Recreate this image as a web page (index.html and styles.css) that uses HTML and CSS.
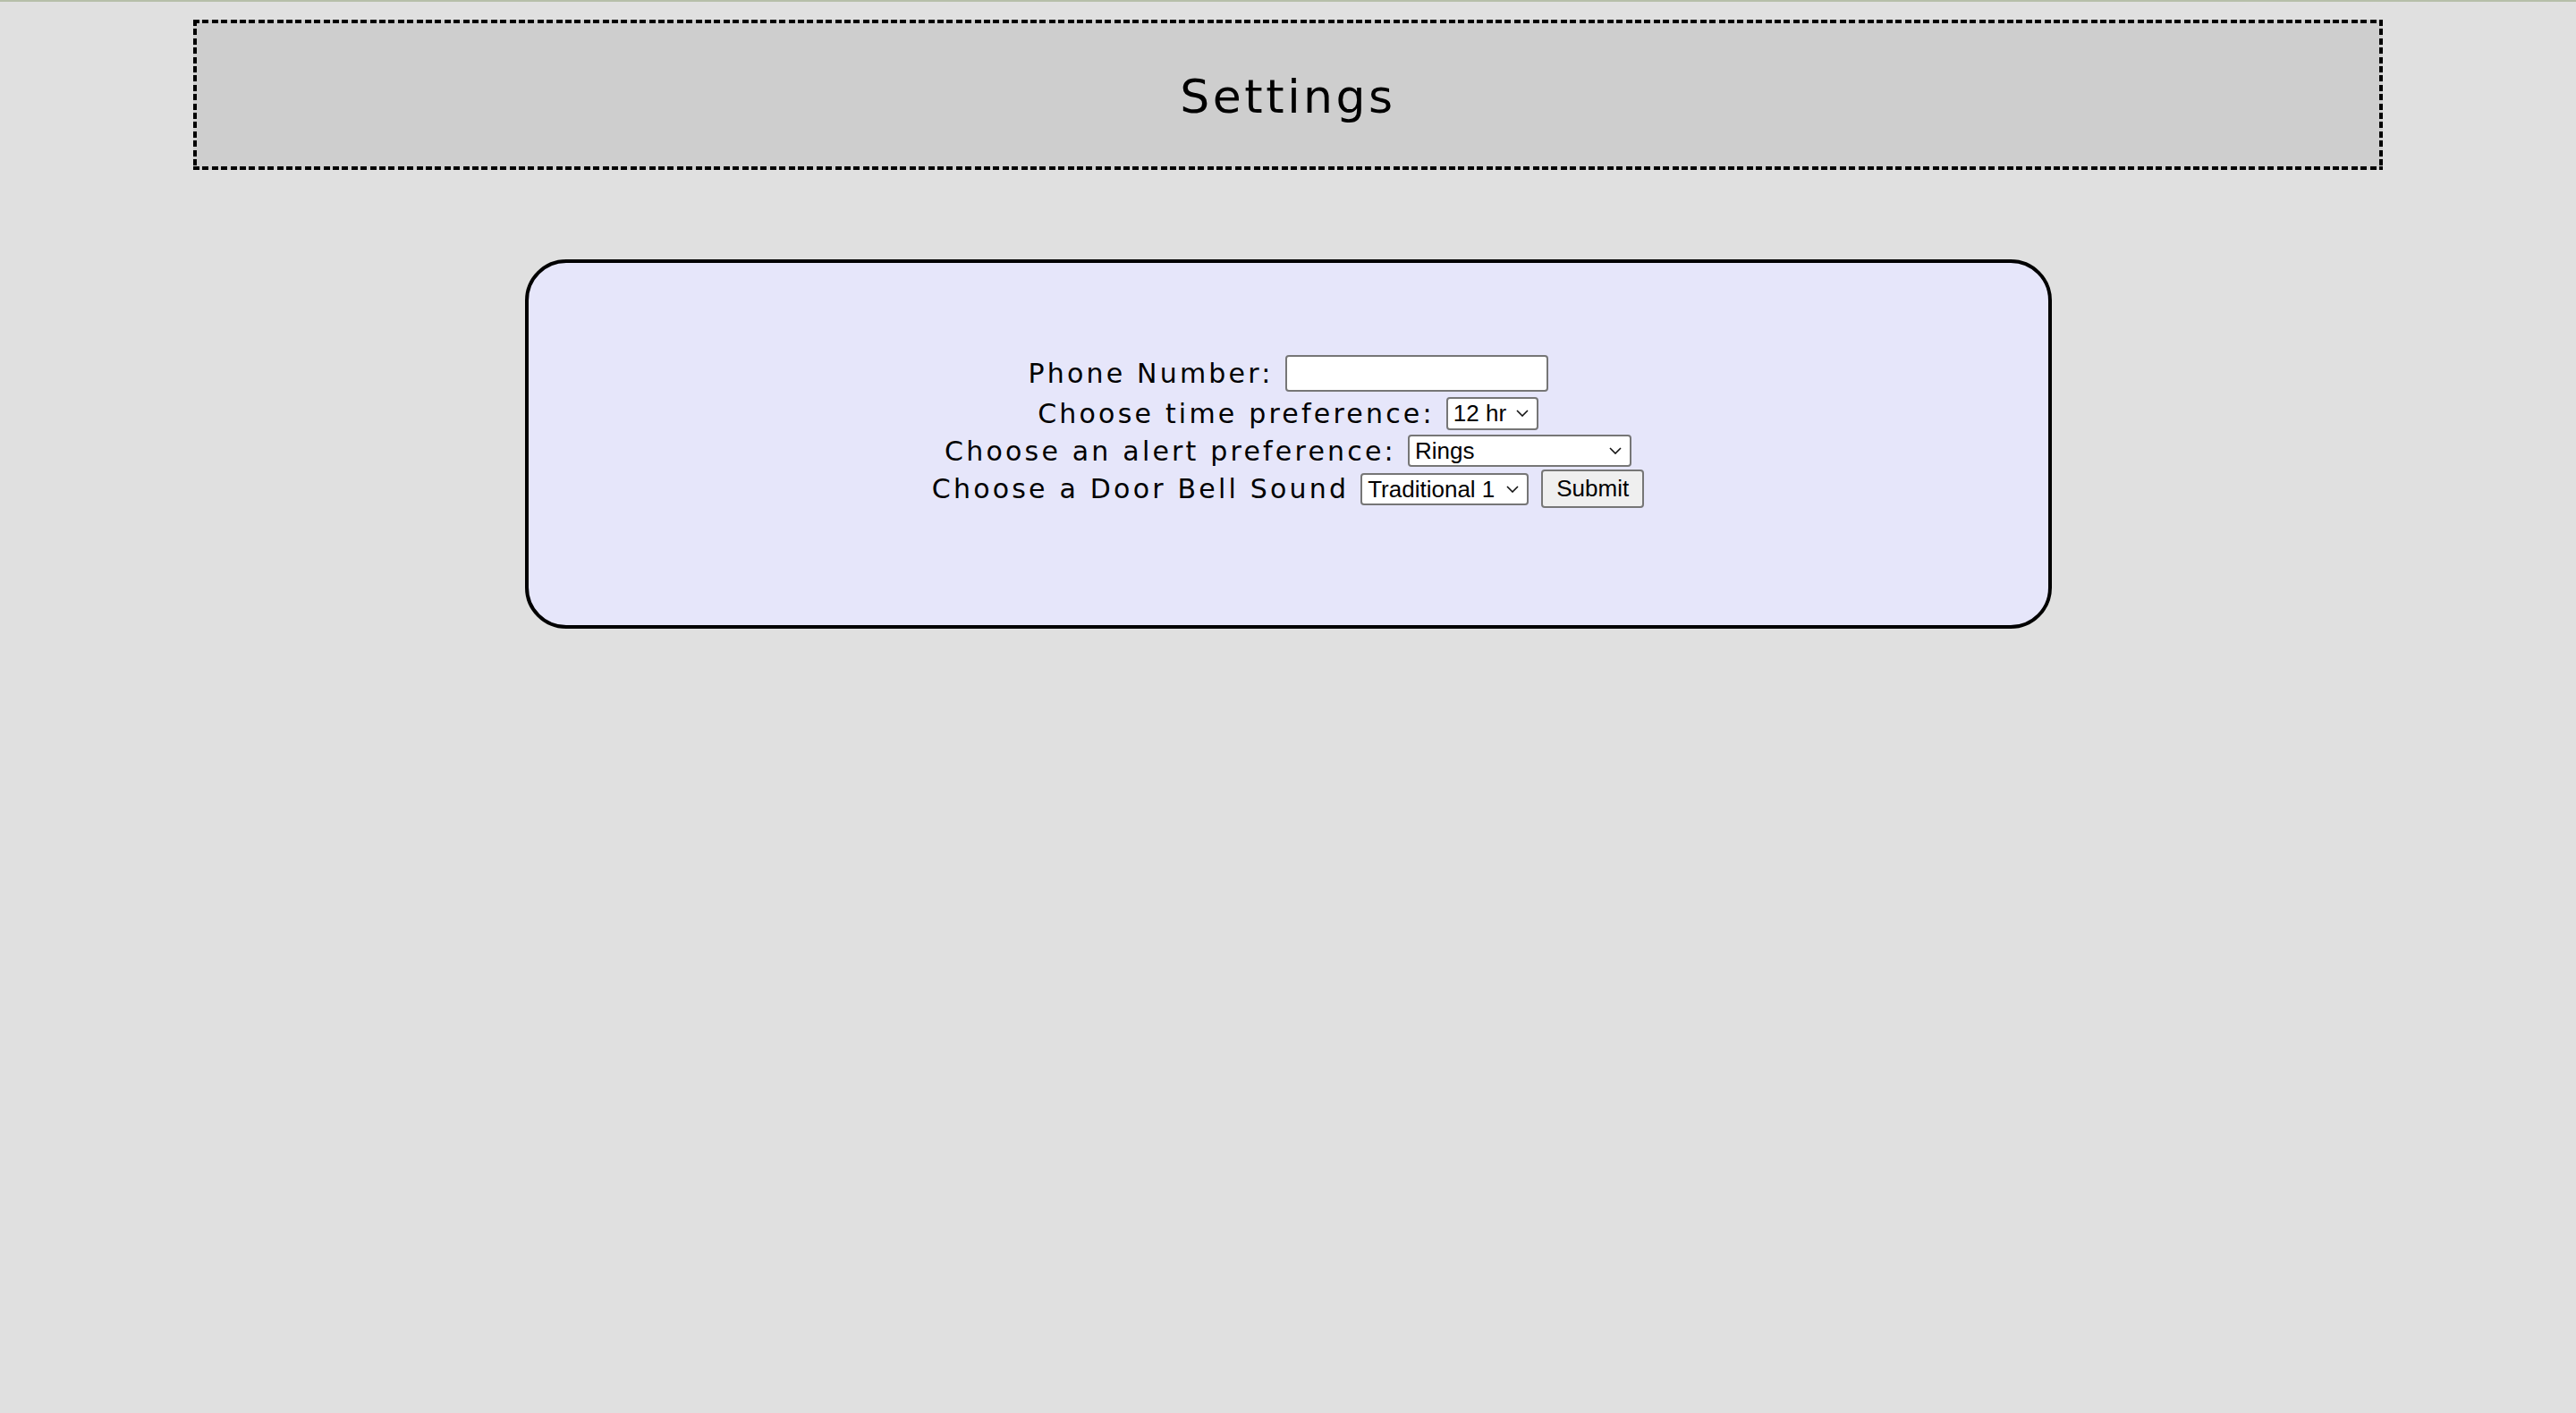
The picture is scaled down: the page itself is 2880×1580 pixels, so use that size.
FILE: index.html
```html
<!DOCTYPE html>
<html lang="en">
<head>
<meta charset="utf-8">
<title>Settings</title>
<link rel="stylesheet" href="styles.css">
</head>
<body>
<div class="topline"></div>
<header class="header">
  <h1 class="title">Settings</h1>
</header>
<main class="card">
  <form class="form">
    <div class="row row-phone"><label class="label">Phone Number:</label><input class="field" type="text"></div>
    <div class="row row-time"><label class="label">Choose time preference:</label><span class="sel sel-time"><select class="dropdown"><option>12 hr</option><option>24 hr</option></select><svg class="chev" viewBox="0 0 14 8"><path d="M1 1 L7 7 L13 1" fill="none" stroke="#111" stroke-width="1.6"/></svg></span></div>
    <div class="row row-alert"><label class="label">Choose an alert preference:</label><span class="sel sel-alert"><select class="dropdown"><option>Rings</option><option>Vibrate</option><option>Rings and Vibrate</option></select><svg class="chev" viewBox="0 0 14 8"><path d="M1 1 L7 7 L13 1" fill="none" stroke="#111" stroke-width="1.6"/></svg></span></div>
    <div class="row row-bell"><label class="label">Choose a Door Bell Sound</label><span class="sel sel-bell"><select class="dropdown"><option>Traditional 1</option><option>Traditional 2</option></select><svg class="chev" viewBox="0 0 14 8"><path d="M1 1 L7 7 L13 1" fill="none" stroke="#111" stroke-width="1.6"/></svg></span><button class="submit" type="button">Submit</button></div>
  </form>
</main>
</body>
</html>
```
FILE: styles.css
```css
html, body {
  margin: 0;
  padding: 0;
}
body {
  background: #e0e0e0;
  min-height: 1580px;
  font-family: "DejaVu Sans", Verdana, sans-serif;
  color: #000;
}
.topline {
  height: 2px;
  background: #b6bfa9;
}
.header {
  margin: 20px auto 0;
  width: 2448px;
  height: 168px;
  box-sizing: border-box;
  padding: 4px 0 0 0;
  display: flex;
  align-items: center;
  justify-content: center;
  background:
    repeating-linear-gradient(90deg, #000 0 7px, transparent 7px 10.4px) left top / 100% 4px no-repeat,
    repeating-linear-gradient(90deg, #000 0 7px, transparent 7px 10.4px) left bottom / 100% 4px no-repeat,
    repeating-linear-gradient(180deg, #000 0 7px, transparent 7px 10.4px) left top / 4px 100% no-repeat,
    repeating-linear-gradient(180deg, #000 0 7px, transparent 7px 10.4px) right top / 4px 100% no-repeat,
    #cecece;
}
.title {
  margin: 0;
  font-size: 52px;
  font-weight: normal;
  letter-spacing: 3.5px;
  line-height: normal;
}
.card {
  display: block;
  width: 1707px;
  height: 413px;
  box-sizing: border-box;
  margin: 100px auto 0;
  border: 4px solid #000;
  border-radius: 46px;
  background: #e6e6fa;
  padding-top: 101px;
}
.form {
  margin: 0;
  display: flex;
  flex-direction: column;
}
.row {
  display: flex;
  justify-content: center;
  align-items: center;
  column-gap: 13px;
  font-size: 30px;
  white-space: nowrap;
}
.row-phone { height: 45px; }
.row-time { height: 44px; }
.row-alert { height: 40px; }
.row-bell { height: 45px; }
.label {
  letter-spacing: 3.2px;
  line-height: normal;
}
.field {
  width: 294px;
  height: 41px;
  box-sizing: border-box;
  border: 2px solid #767676;
  border-radius: 4px;
  background: #fff;
  padding: 0 6px;
  margin: 0;
  font: 26px "Liberation Sans", Arial, sans-serif;
  letter-spacing: normal;
}
.sel {
  position: relative;
  display: block;
  letter-spacing: normal;
}
.dropdown {
  display: block;
  appearance: none;
  -webkit-appearance: none;
  box-sizing: border-box;
  height: 37px;
  border: 2px solid #767676;
  border-radius: 4px;
  background: #fff;
  color: #000;
  padding: 0 0 0 6px;
  margin: 0;
  font: 26px "Liberation Sans", Arial, sans-serif;
  letter-spacing: normal;
}
.sel-time .dropdown { width: 103px; }
.sel-alert .dropdown { width: 250px; height: 36px; }
.sel-bell .dropdown { width: 188px; height: 36px; }
.sel-bell { margin-right: 1px; }
.chev {
  position: absolute;
  right: 11px;
  top: 50%;
  width: 14px;
  height: 8px;
  margin-top: -4px;
  pointer-events: none;
}
.submit {
  box-sizing: border-box;
  width: 115px;
  height: 43px;
  border: 2px solid #767676;
  border-radius: 4px;
  background: #efefef;
  color: #000;
  padding: 0;
  margin: 0;
  font: 26px "Liberation Sans", Arial, sans-serif;
  letter-spacing: normal;
}
```
